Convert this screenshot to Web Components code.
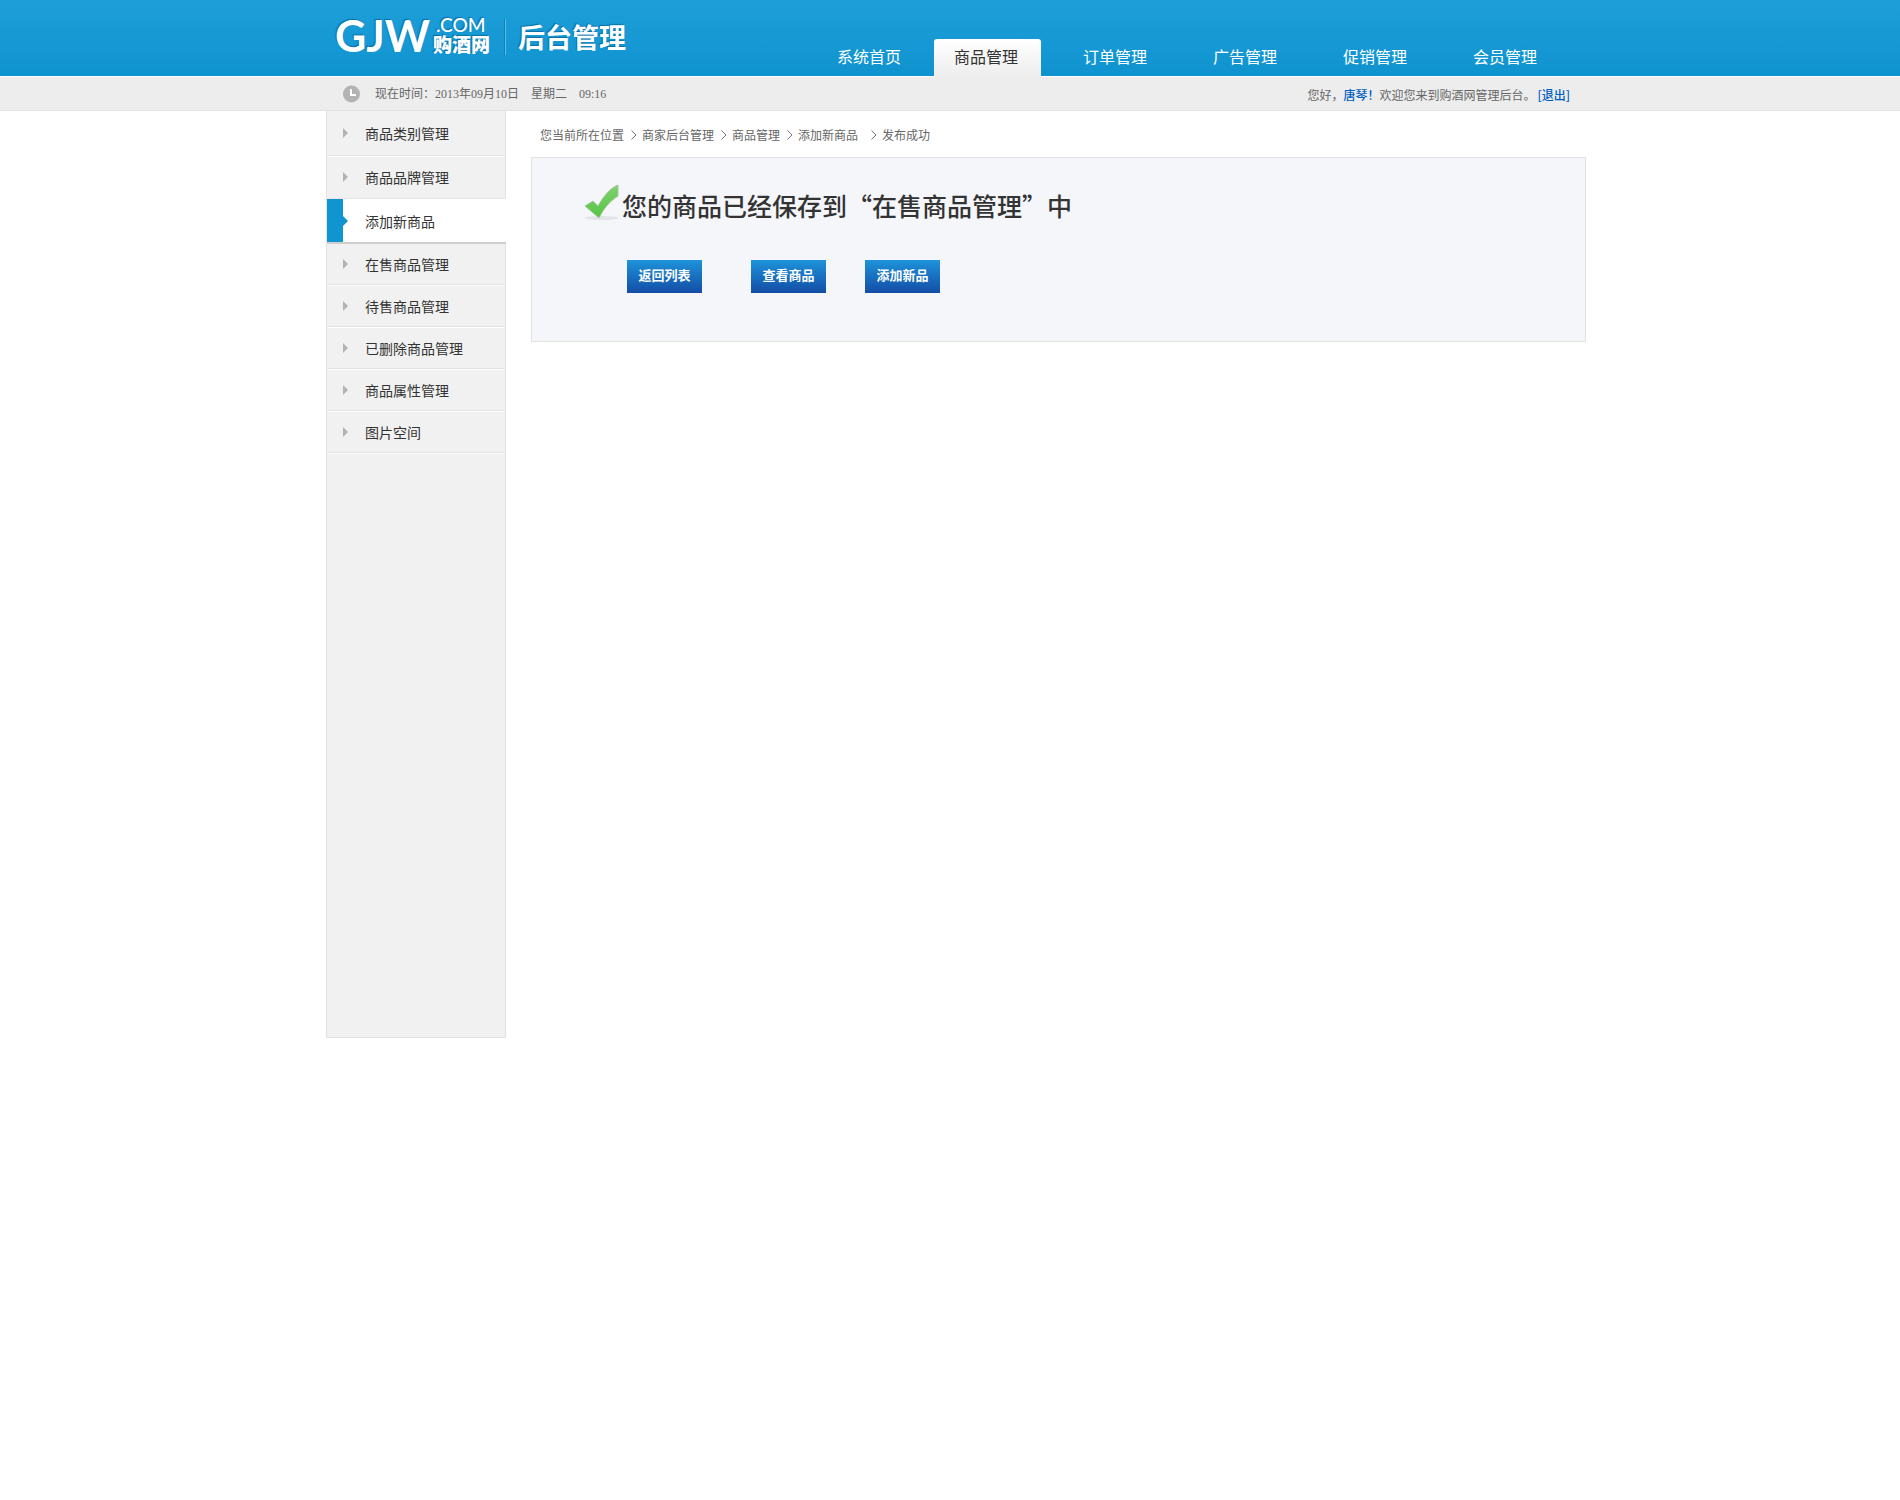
<!DOCTYPE html>
<html lang="zh-CN">
<head>
<meta charset="utf-8">
<title>购酒网后台管理</title>
<style>
body{margin:0;background:#fff;color:#666;font:12px/18px "Noto Sans CJK SC","Liberation Sans",sans-serif}
</style>
</head>
<body>
<admin-app></admin-app>
<script>
function define(name, html){
  const t=document.createElement('template');
  t.innerHTML=html;
  customElements.define(name,class extends HTMLElement{
    constructor(){
      super();
      this.attachShadow({mode:'open'}).append(t.content.cloneNode(true));
    }
  });
}

define('page-width',`<style>
:host{display:flex;box-sizing:border-box;width:100%;max-width:1272px;margin:0 auto;padding-left:12px}
</style><slot></slot>`);

define('site-logo',`<style>
:host{display:flex;align-items:flex-start;color:#fff;padding:12px 0 0 9px;text-shadow:-1px -1px 1px #0a6ea6}
.mark{font:bold 43px/48px Lato,sans-serif;font-kerning:none;width:98px}
.side{display:flex;flex-direction:column;width:72px;padding-top:4px}
.com{font:500 19px/18px Lato,sans-serif;padding-left:3px}
.cn{font:900 19px/20px "Noto Sans CJK SC",sans-serif}
.name{font-size:27px;line-height:36px;font-weight:bold;margin-top:7px;border-left:1px solid #5dbbe4;padding-left:12px;box-shadow:-1px 0 #0c80b9}
</style>
<span class="mark">GJW</span>
<span class="side"><span class="com">.COM</span><span class="cn">购酒网</span></span>
<span class="name">后台管理</span>`);

define('nav-tab',`<style>
:host{display:flex;width:130px;color:#fff}
:host([active]){width:107px;margin-right:9px;color:#333}
a{flex:1;text-align:center;text-decoration:none;color:inherit;font-size:16px;line-height:34px;height:37px}
:host([active]) a{background:linear-gradient(#fff,#ededed);border-radius:3px 3px 0 0;height:38px;box-sizing:border-box;padding-right:3px}
</style><a href="#"><slot></slot></a>`);

define('top-header',`<style>
:host{display:block;height:76px;background:linear-gradient(#1e9fd9,#0f93cf);border-bottom:1px solid #fff}
page-width{height:76px}
nav{display:flex;margin-left:auto;padding:39px 16px 0 0}
</style>
<page-width>
<site-logo></site-logo>
<nav><nav-tab>系统首页</nav-tab><nav-tab active>商品管理</nav-tab><nav-tab>订单管理</nav-tab><nav-tab>广告管理</nav-tab><nav-tab>促销管理</nav-tab><nav-tab>会员管理</nav-tab></nav>
</page-width>`);

define('status-bar',`<style>
:host{display:block;height:33px;background:#ededed;border-bottom:1px solid #e2e2e2}
page-width{height:33px}
svg{margin:8px 15px 0 17px}
time{white-space:pre;padding-top:8px;font-family:"Liberation Serif","Noto Sans CJK SC",serif}
.hi{margin-left:auto;padding:9px 16px 0 0;display:flex}
b,a{color:#0060bf;font-weight:500;text-decoration:none}
a{margin-left:2px}
</style>
<page-width>
<svg width="17" height="18" viewBox="0 0 17 18"><circle cx="8.5" cy="9" r="8.5" fill="#b3b3b3"/><path d="M8 4v6h5" fill="none" stroke="#fff" stroke-width="2"/></svg>
<time datetime="2013-09-10T09:16">现在时间：2013年09月10日　星期二　09:16</time>
<span class="hi"><span>您好，</span><b>唐琴！</b><span>欢迎您来到购酒网管理后台。</span><a href="#">[退出]</a></span>
</page-width>`);

define('side-item',`<style>
:host{display:block;height:42px;box-sizing:border-box;border-bottom:1px solid #fff;margin:0 1px}
a{display:flex;align-items:center;height:40px;line-height:18px;border-bottom:1px solid #e2e2e2;color:#333;text-decoration:none;font-size:14px}
svg{margin:0 17px 0 15px}
path{fill:#b3b3b3}
:host([first]){height:46px}
:host([first]) a{height:44px}
:host([joined]){border-bottom-color:#e6e6e6}
:host([joined]) a{border-bottom-color:#f1f1f1}
:host([active]){height:45px;background:linear-gradient(90deg,#1195d0 16px,#fff 16px);border-bottom:2px solid #cfcfcf;padding-left:16px;margin:0 -1px 0 0}
:host([active]) a{height:43px;border:0}
:host([active]) path{fill:#1195d0}
:host([active]) svg{margin-left:0}
</style><a href="#"><svg width="5" height="10"><path d="M0 0 5 5 0 10z"/></svg><slot></slot></a>`);

define('side-menu',`<style>
:host{display:block;box-sizing:border-box;width:180px;height:927px;flex:none;background:#f1f1f1;border:1px solid #e2e2e2;border-top:0}
</style><nav>
<side-item first>商品类别管理</side-item><side-item joined>商品品牌管理</side-item><side-item active>添加新商品</side-item><side-item>在售商品管理</side-item><side-item>待售商品管理</side-item><side-item>已删除商品管理</side-item><side-item>商品属性管理</side-item><side-item>图片空间</side-item></nav>`);

define('bread-crumb',`<style>
:host{display:flex;align-items:center;height:46px;padding:2px 0 0 9px;box-sizing:border-box}
svg{margin:0 5px 0 7px;fill:none;stroke:#777}
.last{margin-left:13px}
a{color:inherit;text-decoration:none}
</style>
<a href="#">您当前所在位置</a><svg width="6" height="10"><path d="M.5.5 5 5 .5 9.500"/></svg>
<a href="#">商家后台管理</a><svg width="6" height="10"><path d="M.5.5 5 5 .5 9.500"/></svg>
<a href="#">商品管理</a><svg width="6" height="10"><path d="M.5.5 5 5 .5 9.500"/></svg>
<a href="#">添加新商品</a><svg class="last" width="6" height="10"><path d="M.5.5 5 5 .5 9.500"/></svg>
<span>发布成功</span>`);

define('blue-button',`<style>
:host{display:block}
button{display:block;width:75px;height:33px;border:0;padding:0 0 3px;color:#fff;background:linear-gradient(#1e93da,#134da6);font:bold 13px/30px "Noto Sans CJK SC",sans-serif}
</style><button type="button"><slot></slot></button>`);

define('success-panel',`<style>
:host{display:block;box-sizing:border-box;height:185px;background:#f4f6fa;border:1px solid #e2e2e2;padding:26px 0 0 52px}
.msg{display:flex;height:36px}
h1{margin:0 0 0 3px;font-size:25px;line-height:42px;font-weight:500;color:#333}
.btns{display:flex;gap:39px;padding:40px 0 0 43px}
blue-button:first-child{margin-right:10px}
</style>
<div class="msg">
<svg width="35" height="36" viewBox="0 0 35 36"><defs><linearGradient id="g" x2="0" y2="1"><stop stop-color="#7ed36c"/><stop offset="1" stop-color="#56c445"/></linearGradient></defs>
<ellipse cx="17.500" cy="34" rx="17" ry="2" fill="#e3e5e9"/>
<path d="M1 22 9 17 14 22C19 13 26 4 34 1L34 12C26 17 20 24 15 34Z" fill="url(#g)" stroke="#a4c99b" stroke-width="1"/></svg>
<h1>您的商品已经保存到“在售商品管理”中</h1></div>
<div class="btns"><blue-button>返回列表</blue-button><blue-button>查看商品</blue-button><blue-button>添加新品</blue-button></div>`);

define('admin-app',`<style>
:host{display:block}
main{flex:1;min-width:0;margin-left:25px}
</style>
<top-header></top-header>
<status-bar></status-bar>
<page-width><side-menu></side-menu><main><bread-crumb></bread-crumb><success-panel></success-panel></main></page-width>`);
</script>
</body>
</html>
